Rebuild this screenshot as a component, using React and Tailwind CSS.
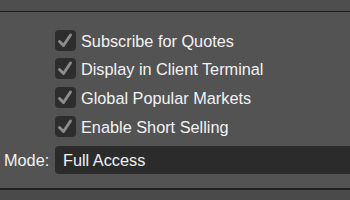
export default function App() {
  const options = [
    { label: 'Subscribe for Quotes', mt: 'mt-0' },
    { label: 'Display in Client Terminal', mt: 'mt-[7px]' },
    { label: 'Global Popular Markets', mt: 'mt-[8px]' },
    { label: 'Enable Short Selling', mt: 'mt-[8px]' },
  ];

  return (
    <div className="w-[350px] h-[200px] overflow-hidden bg-[#535353] text-[#f2f2f2] font-['Liberation_Sans',Arial,sans-serif] text-[16.3px] flex flex-col">
      <div className="h-[12px] bg-[#4e4e4e] border-b border-[#1c1c1c]" />
      <div className="h-[178px] border-b-2 border-[#202020] pt-[18px]">
        <div className="flex flex-col pl-[55px]">
          {options.map((o) => (
            <label key={o.label} className={`flex items-center gap-[5px] h-[21px] ${o.mt}`}>
              <span className="w-[21px] h-[21px] rounded-[4px] bg-[#2d2d2d] flex items-center justify-center shrink-0">
                <svg width="21" height="21" viewBox="0 0 21 21">
                  <polyline points="4.5,11.5 8.5,15.5 15.5,5" fill="none" stroke="#8c8c8c" strokeWidth="3" strokeLinecap="round" strokeLinejoin="round" />
                </svg>
              </span>
              <span className="leading-none whitespace-nowrap pt-[1px]">{o.label}</span>
            </label>
          ))}
        </div>
        <div className="flex items-center mt-[9px]">
          <span className="w-[55px] pl-[4px] whitespace-nowrap">Mode:</span>
          <div className="flex-1 h-[28px] bg-[#2b2b2b] rounded-l-[4px] flex items-center pl-[8px] whitespace-nowrap">
            Full Access
          </div>
        </div>
      </div>
      <div className="flex-1 bg-[#4a4a4a]" />
    </div>
  );
}
